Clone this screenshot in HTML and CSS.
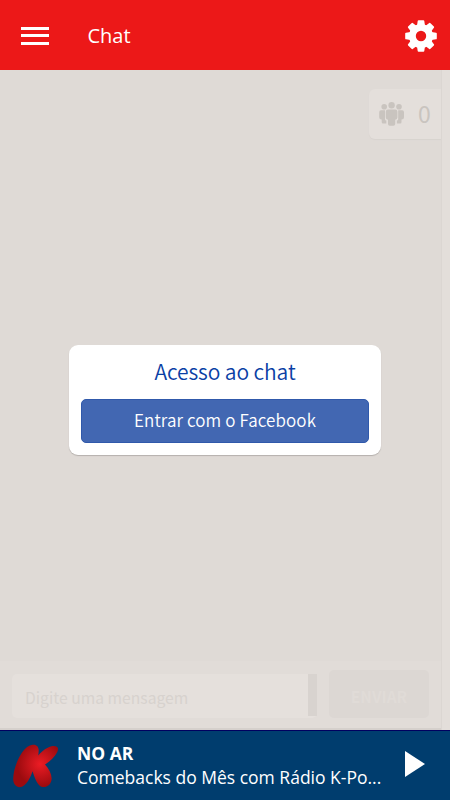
FILE: index.html
```html
<!DOCTYPE html>
<html lang="pt-BR">

<head>
    <meta charset="UTF-8">
    <meta name="viewport" content="width=device-width, initial-scale=1.0">
    <title>Chat</title>
    <link rel="stylesheet" href="styles.css">
</head>

<body>
    <header class="toolbar">
        <button class="icon-button menu-button" aria-label="Menu">
            <span></span>
            <span></span>
            <span></span>
        </button>
        <h1>Chat</h1>
        <button class="icon-button" aria-label="Configurações">
            <svg width="32" height="32" viewBox="-16 -16 32 32" fill="#fff">
                <defs>
                    <path id="tooth" d="M-4.2-9 L-3.3-15 Q-3.2-15.8-2.4-15.8 H2.4 Q3.2-15.8 3.3-15 L4.2-9 Z" />
                </defs>
                <circle r="8.6" fill="none" stroke="#fff" stroke-width="6.8" />
                <use href="#tooth" />
                <use href="#tooth" transform="rotate(45)" />
                <use href="#tooth" transform="rotate(90)" />
                <use href="#tooth" transform="rotate(135)" />
                <use href="#tooth" transform="rotate(180)" />
                <use href="#tooth" transform="rotate(225)" />
                <use href="#tooth" transform="rotate(270)" />
                <use href="#tooth" transform="rotate(315)" />
            </svg>
        </button>
    </header>

    <main class="chat">
        <div class="chat-body">
            <div class="messages">
                <div class="users">
                    <svg width="26" height="24" viewBox="0 0 26 24" fill="#c9c4bf">
                        <circle cx="5.2" cy="4.7" r="2.8" />
                        <circle cx="20" cy="4.7" r="2.8" />
                        <circle cx="12.6" cy="3.2" r="3.2" />
                        <path d="M2 8.3 H6 V17.2 Q6 18.5 7.3 18.5 V21.5 H4 Q2.7 21.5 2.7 20 V17.5 Q.2 17.5 .2 15 V10.3 Q.2 8.3 2 8.3 Z" />
                        <path d="M23.2 8.3 H19.2 V17.2 Q19.2 18.5 17.9 18.5 V21.5 H21.2 Q22.5 21.5 22.5 20 V17.5 Q25 17.5 25 15 V10.3 Q25 8.3 23.2 8.3 Z" />
                        <path d="M9 7.5 H16.2 Q18.4 7.5 18.4 9.7 V15.5 Q18.4 17.6 16.2 17.8 V22 Q16.2 23.7 14.5 23.7 H10.7 Q9 23.7 9 22 V17.8 Q6.8 17.6 6.8 15.5 V9.7 Q6.8 7.5 9 7.5 Z" />
                    </svg>
                    <span>0</span>
                </div>
                <div class="login">
                    <h2>Acesso ao chat</h2>
                    <button class="facebook">Entrar com o Facebook</button>
                </div>
            </div>
            <form class="composer">
                <div class="field">
                    <span>Digite uma mensagem</span>
                    <div class="field-scroll"></div>
                </div>
                <button type="button" class="send">ENVIAR</button>
            </form>
        </div>
        <div class="scrollbar"></div>
    </main>

    <footer class="player">
        <svg class="logo" width="46" height="44" viewBox="0 0 46 44">
            <defs>
                <radialGradient id="red" gradientUnits="userSpaceOnUse" cx="28" cy="20" r="23">
                    <stop offset="0" stop-color="#ec1c24" />
                    <stop offset="1" stop-color="#9c0b0f" />
                </radialGradient>
            </defs>
            <path fill="url(#red)" d="M20.5 .8 C24.5 .1 27 3 26.7 7 L26.3 11.5 C30 7 35.5 2.8 40.5 2 C46 1.4 47.2 4.5 45 8.5 C42.5 13 38 17.5 33 20.5 C37 25 39.8 30 39.6 35 C39.2 40.5 35 43.7 30.5 43 C25.5 42 23 34.5 20.5 27.2 C18.5 33.5 14.5 41.5 9 43 C4.5 44 1 40 1.2 34.5 C1.5 26 5 16 10 8.5 C13 4 17 1.3 20.5 .8 Z" />
        </svg>
        <div class="track">
            <strong>NO AR</strong>
            <span>Comebacks do Mês com Rádio K-Po...</span>
        </div>
        <button class="icon-button" aria-label="Tocar">
            <svg width="20" height="26" viewBox="0 0 20 26" fill="#fff">
                <path d="M0 0 L20 13 L0 26 Z" />
            </svg>
        </button>
    </footer>
</body>

</html>
```
FILE: styles.css
```css
* {
    box-sizing: border-box;
}

body {
    margin: 0;
    height: 100vh;
    display: flex;
    flex-direction: column;
    overflow: hidden;
    font-family: "Open Sans", "Noto Sans", sans-serif;
    background-color: #dfdad6;
}

button {
    border: none;
    padding: 0;
    cursor: pointer;
}

.icon-button {
    background: none;
    display: flex;
}

/* Barra superior */
.toolbar {
    height: 70px;
    padding: 1px 13px 0 21px;
    display: flex;
    align-items: center;
    background-color: #ec1818;
    color: #fff;
}

.toolbar h1 {
    flex: 1;
    margin: 0 0 0 38.5px;
    font-size: 20px;
    font-weight: 400;
}

.menu-button {
    width: 28px;
    flex-direction: column;
    gap: 4.5px;
}

.menu-button span {
    height: 3px;
    background-color: #fff;
}

/* Chat */
.chat {
    height: 660px;
    display: flex;
    font-family: "Noto Sans CJK SC", sans-serif;
}

.chat-body {
    flex: 1;
    display: flex;
    flex-direction: column;
}

.scrollbar {
    width: 9px;
    background-color: #e3deda;
    border-left: 1px solid #dbd6d2;
}

.messages {
    flex: 1;
    display: flex;
    flex-direction: column;
}

.users {
    align-self: flex-end;
    width: 72px;
    height: 50px;
    margin-top: 19px;
    padding-left: 10px;
    display: flex;
    align-items: center;
    gap: 13px;
    border-radius: 6px 0 0 6px;
    background-color: #e4dfdb;
    box-shadow: 0 1px 1px #d8d3cf;
    color: #c9c4bf;
    font-size: 23px;
    font-weight: 400;
}

.users span {
    margin-bottom: 3px;
}

.login {
    width: 312px;
    height: 110px;
    margin: 206px 0 0 69px;
    padding: 8px 12px 0;
    border-radius: 9px;
    background-color: #fff;
    box-shadow: 0 1px 1px #b5b0ad;
    text-align: center;
}

.login h2 {
    margin: 0 0 10px;
    font-size: 21px;
    line-height: 36px;
    font-weight: 350;
    letter-spacing: -0.1px;
    color: #0b3fa5;
}

.facebook {
    width: 100%;
    height: 44px;
    padding-bottom: 3px;
    border-radius: 5px;
    border: 1px solid #3059ab;
    background-color: #4267b2;
    color: #fff;
    font-family: inherit;
    font-size: 17px;
    font-weight: 350;
    letter-spacing: 0.1px;
}

.composer {
    height: 69px;
    margin: 0;
    padding: 9px 12px 0;
    display: flex;
    gap: 12px;
    background-color: #e1dcd8;
    border-bottom: 2px solid #d5d0cc;
}

.field {
    flex: 1;
    height: 44px;
    margin-top: 4px;
    padding-left: 13px;
    display: flex;
    align-items: center;
    justify-content: space-between;
    border-radius: 5px;
    background-color: #e5e0dc;
    color: #d7d2ce;
    font-size: 15.7px;
}

.field span {
    margin-top: 3px;
}

.field-scroll {
    width: 9px;
    height: 42px;
    align-self: flex-start;
    background-color: #d8d3cf;
}

.send {
    width: 100px;
    height: 48px;
    padding-top: 3px;
    border-radius: 5px;
    background-color: #dcd7d3;
    color: #e0dbd7;
    font-family: inherit;
    font-size: 15.5px;
    font-weight: 700;
}

/* Player */
.player {
    height: 70px;
    padding: 0 25px 0 12px;
    display: flex;
    align-items: center;
    background-color: #003d6e;
    border-top: 1px solid #000060;
    color: #fff;
}

.player .icon-button {
    margin-bottom: 3px;
}

.track {
    flex: 1;
    margin: 0 0 2px 19px;
    display: flex;
    flex-direction: column;
    font-size: 17.5px;
    line-height: 24px;
    white-space: nowrap;
}
```
